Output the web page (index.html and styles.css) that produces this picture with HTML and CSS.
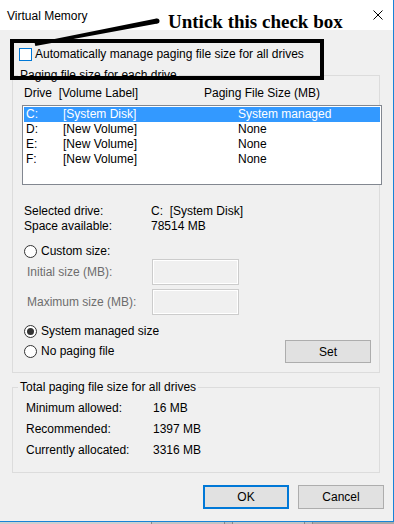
FILE: index.html
```html
<!DOCTYPE html>
<html>
<head>
<meta charset="utf-8">
<title>Virtual Memory</title>
<link rel="stylesheet" href="styles.css">
</head>
<body>
<div class="window">
  <div class="titlebar">
    <span class="title">Virtual Memory</span>
    <svg class="close" width="10" height="10" viewBox="0 0 10 10"><path d="M0.5 0.5L9.5 9.5M9.5 0.5L0.5 9.5" stroke="#000" stroke-width="1" fill="none"/></svg>
  </div>
  <div class="content">
    <div class="checkrow">
      <span class="checkbox"></span>
      <span>Automatically manage paging file size for all drives</span>
    </div>

    <div class="group group-drives">
      <div class="legend">Paging file size for each drive</div>
      <div class="colhead"><span class="ch-drive">Drive&nbsp; [Volume Label]</span><span>Paging File Size (MB)</span></div>
      <div class="listbox">
        <div class="lrow selected"><span>C:</span><span>[System Disk]</span><span>System managed</span></div>
        <div class="lrow"><span>D:</span><span>[New Volume]</span><span>None</span></div>
        <div class="lrow"><span>E:</span><span>[New Volume]</span><span>None</span></div>
        <div class="lrow"><span>F:</span><span>[New Volume]</span><span>None</span></div>
      </div>
      <div class="info">
        <span>Selected drive:</span><span>C:&nbsp; [System Disk]</span>
        <span>Space available:</span><span>78514 MB</span>
      </div>
      <div class="radio-row custom"><span class="radio"></span><span>Custom size:</span></div>
      <div class="sizes">
        <span class="dim">Initial size (MB):</span><span class="field"></span>
        <span class="dim">Maximum size (MB):</span><span class="field"></span>
      </div>
      <div class="radio-row sysm"><span class="radio checked"></span><span>System managed size</span></div>
      <div class="nopage-row">
        <div class="radio-row"><span class="radio"></span><span>No paging file</span></div>
        <div class="btn btn-set">Set</div>
      </div>
    </div>

    <div class="group group-total">
      <div class="legend">Total paging file size for all drives</div>
      <div class="totals">
        <span>Minimum allowed:</span><span>16 MB</span>
        <span>Recommended:</span><span>1397 MB</span>
        <span>Currently allocated:</span><span>3316 MB</span>
      </div>
    </div>

    <div class="buttons">
      <div class="btn btn-ok">OK</div>
      <div class="btn">Cancel</div>
    </div>
  </div>
</div>
<div class="strip">
  <span class="seg s1"></span><span class="seg s2"></span><span class="seg s3"></span><span class="seg s4"></span><span class="seg s5"></span><span class="seg s6"></span>
</div>

<svg class="arrow" width="394" height="60" viewBox="0 0 394 60">
  <polygon points="34.7,43 156.5,18.5 157.5,23.5 35.3,46" fill="#000"/>
  <circle cx="157" cy="21" r="2.5" fill="#000"/>
</svg>
<div class="note">Untick this check box</div>
</body>
</html>
```

FILE: styles.css
```css
* { box-sizing: border-box; }
html, body { margin: 0; padding: 0; }
body {
  width: 394px;
  height: 524px;
  overflow: hidden;
  background: #f0f0f0;
  font-family: "Liberation Sans", Arial, sans-serif;
  font-size: 12px;
  color: #000;
  position: relative;
}
.window {
  width: 394px;
  height: 522px;
  border-right: 1px solid #1883d7;
  border-bottom: 1px solid #1883d7;
  background: #f0f0f0;
}
.titlebar {
  height: 30px;
  background: #fff;
  display: flex;
  align-items: center;
  padding-left: 7px;
  line-height: 16px;
}
.title { flex: 1; padding-top: 1px; }
.close { margin-right: 10px; display: block; }

.content { padding-top: 17px; }

.checkrow {
  position: relative;
  display: flex;
  align-items: center;
  gap: 3px;
  height: 15px;
  line-height: 15px;
  margin-left: 19px;
}
.checkbox {
  width: 13px;
  height: 13px;
  border: 1px solid #0078d7;
  background: #fff;
}
.checkrow::after {
  content: "";
  position: absolute;
  left: -9px;
  top: -8px;
  width: 306px;
  height: 33px;
  border: 4px solid #000;
}

.group {
  width: 368px;
  margin: 13px 0 0 12px;
  border: 1px solid #dcdcdc;
  padding: 0 0 9px 11px;
}
.legend {
  width: fit-content;
  margin: -9px 0 0 -6px;
  padding: 0 2px;
  background: #f0f0f0;
  line-height: 16px;
}
.colhead { display: flex; margin-top: 2px; line-height: 16px; }
.ch-drive { width: 180px; }

.listbox {
  width: 360px;
  height: 80px;
  margin: 4px 0 0 -2px;
  border: 1px solid #828790;
  background: #fff;
  padding: 1px;
}
.lrow {
  display: grid;
  grid-template-columns: 37px 175px 1fr;
  height: 15px;
  line-height: 15px;
  padding-left: 2px;
}
.lrow.selected { background: #3399ff; color: #fff; }

.info {
  margin-top: 19px;
  display: grid;
  grid-template-columns: 127px auto;
  line-height: 15px;
}

.radio-row {
  display: flex;
  align-items: center;
  gap: 4px;
  height: 15px;
  line-height: 15px;
}
.custom { margin-top: 10px; }
.radio {
  position: relative;
  width: 13px;
  height: 13px;
  border-radius: 50%;
  border: 1px solid #333;
  background: #fff;
}
.radio.checked::after {
  content: "";
  position: absolute;
  left: 2px;
  top: 2px;
  width: 7px;
  height: 7px;
  border-radius: 50%;
  background: #333;
}

.sizes {
  display: grid;
  grid-template-columns: 128px 87px;
  row-gap: 4px;
  align-items: center;
}
.dim { color: #6d6d6d; padding-left: 3px; line-height: 15px; }
.field {
  height: 26px;
  border: 1px solid #cccccc;
  box-shadow: inset 0 0 0 1px #fff;
}
.sysm { margin-top: 9px; }
.nopage-row {
  display: flex;
  align-items: center;
  height: 23px;
  margin-top: 1px;
}

.btn {
  width: 86px;
  height: 23px;
  border: 1px solid #adadad;
  background: #e1e1e1;
  display: flex;
  align-items: center;
  justify-content: center;
  line-height: 16px;
}
.btn-set { margin-left: auto; margin-right: 8px; }

.group-total { margin-top: 14px; padding-bottom: 11px; }
.totals {
  margin: 3px 0 0 2px;
  display: grid;
  grid-template-columns: 127px auto;
  line-height: 21px;
}

.buttons {
  display: flex;
  justify-content: flex-end;
  gap: 9px;
  margin-top: 12px;
  padding-right: 9px;
}
.buttons .btn { height: 24px; }
.btn-ok { border: 2px solid #0078d7; }

.strip { display: flex; height: 2px; background: #c6c6c6; }
.seg { height: 2px; }
.s1 { width: 152px; background: #cfcfcf; border-right: 1px solid #8a8a8a; }
.s2 { width: 73px; background: #c4c4c4; border-right: 1px solid #8a8a8a; }
.s3 { width: 8px; background: #bdbdbd; border-right: 1px solid #8a8a8a; }
.s4 { width: 72px; background: #c4c4c4; border-right: 1px solid #8a8a8a; }
.s5 { width: 8px; background: #bdbdbd; border-right: 1px solid #8a8a8a; }
.s6 { flex: 1; background: #a9a9a9; }

.arrow { position: absolute; left: 0; top: 0; }
.note {
  position: absolute;
  left: 168px;
  top: 12px;
  font-family: "Liberation Serif", "Times New Roman", serif;
  font-weight: bold;
  font-size: 19px;
  line-height: 19px;
  color: #000;
  white-space: nowrap;
}
```
